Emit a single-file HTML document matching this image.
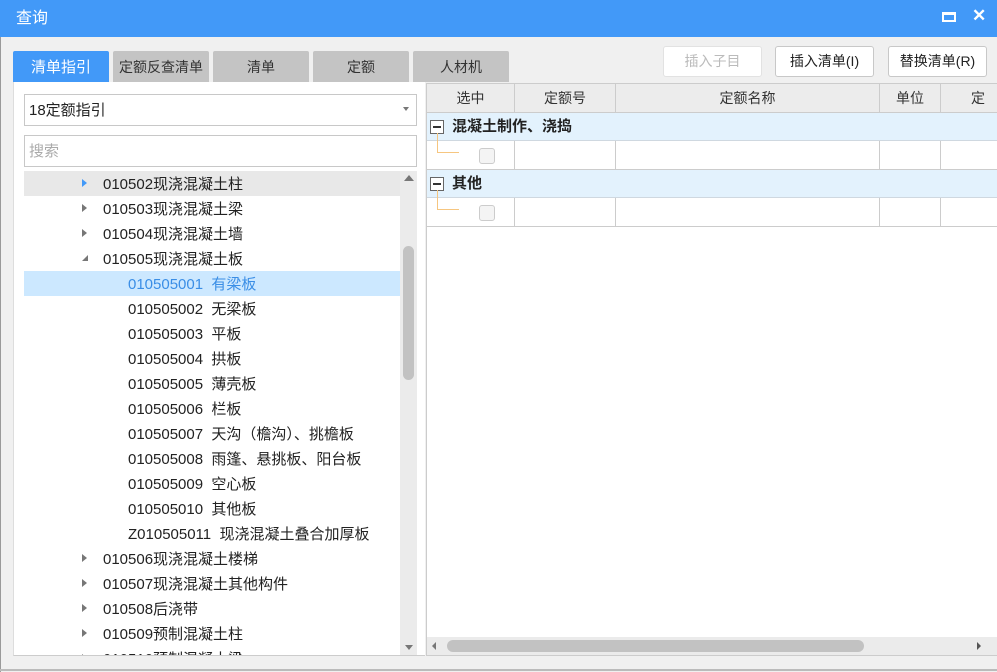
<!DOCTYPE html>
<html><head><meta charset="utf-8"><style>
*{margin:0;padding:0;box-sizing:border-box}
body{width:997px;height:672px;overflow:hidden;background:#f0f0f0;font-family:"Liberation Sans","Noto Sans CJK SC",sans-serif;font-size:14px;color:#222;position:relative}
.a{position:absolute}
.title{left:0;top:0;width:997px;height:37px;background:#4299f8;color:#fff;font-size:16px;line-height:37px;padding-left:16px}
.tab{top:51px;height:31px;width:96px;background:#c4c4c4;text-align:center;line-height:33px;color:#333;font-size:14px;border-radius:2px 2px 0 0}
.btn{top:46px;height:31px;width:99px;background:#fff;border:1px solid #c8c8c8;border-radius:3px;text-align:center;line-height:29px;font-size:14px}
.row{left:24px;width:376px;height:25px;line-height:27px;white-space:nowrap;font-size:15px}
.tri{position:absolute;left:58px;top:8px;width:0;height:0;border-top:4px solid transparent;border-bottom:4px solid transparent;border-left:5px solid #777}
.hd{top:84px;height:29px;line-height:29px;text-align:center;background:#ececec;border-right:1px solid #ccc;border-bottom:1px solid #ccc;font-size:14px;color:#333}
.grp{left:427px;width:570px;height:28px;background:#e3f2fd;border-bottom:1px solid #cfd8e0;font-weight:bold;font-size:15px;line-height:28px;padding-left:25px}
.minus{position:absolute;left:3px;top:7px;width:14px;height:14px;border:1px solid #666;background:#fff}
.minus:after{content:"";position:absolute;left:2px;top:5px;width:8px;height:1.5px;background:#333}
.cell{height:29px;border-right:1px solid #ccc;border-bottom:1px solid #ccc;background:#fff}
.cb{position:absolute;left:52px;top:7px;width:16px;height:16px;border:1px solid #ccc;border-radius:3px;background:#f4f4f4}
.ln{position:absolute;left:10px;top:-8px;width:22px;height:20px;border-left:1px solid #f6c680;border-bottom:1px solid #f6c680}
</style></head><body>
<div class="a title">查询</div>
<div class="a" style="left:942px;top:12px;width:14px;height:10px;border:2px solid #fff;border-top-width:3px"></div>
<div class="a" style="left:972px;top:6px;color:#fff;font-size:17px;font-weight:bold;line-height:20px">✕</div>
<div class="a" style="left:0;top:37px;width:1px;height:635px;background:#9a9a9a"></div>
<div class="a" style="left:0;top:669px;width:997px;height:2px;background:#bbb"></div>

<div class="a tab" style="left:13px;background:#4299f8;color:#fff;font-size:15px">清单指引</div>
<div class="a tab" style="left:113px">定额反查清单</div>
<div class="a tab" style="left:213px">清单</div>
<div class="a tab" style="left:313px">定额</div>
<div class="a tab" style="left:413px">人材机</div>

<div class="a btn" style="left:663px;color:#bbb;border-color:#e2e2e2">插入子目</div>
<div class="a btn" style="left:775px">插入清单(I)</div>
<div class="a btn" style="left:888px">替换清单(R)</div>

<div class="a" style="left:13px;top:82px;width:412px;height:574px;background:#fff;border-left:1px solid #ddd;border-bottom:1px solid #ccc"></div>
<div class="a" style="left:24px;top:94px;width:393px;height:32px;border:1px solid #c8c8c8;line-height:31px;padding-left:4px;font-size:15px">18定额指引</div>
<div class="a" style="left:403px;top:107px;border-left:3px solid transparent;border-right:3px solid transparent;border-top:4px solid #777"></div>
<div class="a" style="left:24px;top:135px;width:393px;height:32px;border:1px solid #c8c8c8;line-height:31px;padding-left:4px;color:#aaa;font-size:15px">搜索</div>

<div class="a" style="left:24px;top:171px;width:393px;height:484px;overflow:hidden">
<div class="a row" style="left:0;top:0;background:#e8e8e8"><span class="tri" style="border-left-color:#4299f8"></span><span style="position:absolute;left:79px">010502现浇混凝土柱</span></div>
<div class="a row" style="left:0;top:25px"><span class="tri"></span><span style="position:absolute;left:79px">010503现浇混凝土梁</span></div>
<div class="a row" style="left:0;top:50px"><span class="tri"></span><span style="position:absolute;left:79px">010504现浇混凝土墙</span></div>
<div class="a row" style="left:0;top:75px"><span style="position:absolute;left:58px;top:9px;border-left:6px solid transparent;border-bottom:6px solid #777"></span><span style="position:absolute;left:79px">010505现浇混凝土板</span></div>
<div class="a row" style="left:0;top:100px;background:#cce8ff;color:#3a8ee6"><span style="position:absolute;left:104px">010505001&nbsp;&nbsp;有梁板</span></div>
<div class="a row" style="left:0;top:125px"><span style="position:absolute;left:104px">010505002&nbsp;&nbsp;无梁板</span></div>
<div class="a row" style="left:0;top:150px"><span style="position:absolute;left:104px">010505003&nbsp;&nbsp;平板</span></div>
<div class="a row" style="left:0;top:175px"><span style="position:absolute;left:104px">010505004&nbsp;&nbsp;拱板</span></div>
<div class="a row" style="left:0;top:200px"><span style="position:absolute;left:104px">010505005&nbsp;&nbsp;薄壳板</span></div>
<div class="a row" style="left:0;top:225px"><span style="position:absolute;left:104px">010505006&nbsp;&nbsp;栏板</span></div>
<div class="a row" style="left:0;top:250px"><span style="position:absolute;left:104px">010505007&nbsp;&nbsp;天沟（檐沟）、挑檐板</span></div>
<div class="a row" style="left:0;top:275px"><span style="position:absolute;left:104px">010505008&nbsp;&nbsp;雨篷、悬挑板、阳台板</span></div>
<div class="a row" style="left:0;top:300px"><span style="position:absolute;left:104px">010505009&nbsp;&nbsp;空心板</span></div>
<div class="a row" style="left:0;top:325px"><span style="position:absolute;left:104px">010505010&nbsp;&nbsp;其他板</span></div>
<div class="a row" style="left:0;top:350px"><span style="position:absolute;left:104px">Z010505011&nbsp;&nbsp;现浇混凝土叠合加厚板</span></div>
<div class="a row" style="left:0;top:375px"><span class="tri"></span><span style="position:absolute;left:79px">010506现浇混凝土楼梯</span></div>
<div class="a row" style="left:0;top:400px"><span class="tri"></span><span style="position:absolute;left:79px">010507现浇混凝土其他构件</span></div>
<div class="a row" style="left:0;top:425px"><span class="tri"></span><span style="position:absolute;left:79px">010508后浇带</span></div>
<div class="a row" style="left:0;top:450px"><span class="tri"></span><span style="position:absolute;left:79px">010509预制混凝土柱</span></div>
<div class="a row" style="left:0;top:475px"><span class="tri"></span><span style="position:absolute;left:79px">010510预制混凝土梁</span></div>
<div class="a" style="left:376px;top:0;width:17px;height:484px;background:#ebebeb"></div>
<div class="a" style="left:379px;top:75px;width:11px;height:134px;background:#c2c2c2;border-radius:6px"></div>
<div class="a" style="left:380px;top:4px;border-left:5px solid transparent;border-right:5px solid transparent;border-bottom:6px solid #777"></div>
<div class="a" style="left:381px;top:474px;border-left:4px solid transparent;border-right:4px solid transparent;border-top:5px solid #777"></div>
</div>

<div class="a" style="left:426px;top:83px;width:571px;height:573px;background:#fff;border:1px solid #ccc;border-right:none"></div>
<div class="a hd" style="left:427px;width:88px">选中</div>
<div class="a hd" style="left:515px;width:101px">定额号</div>
<div class="a hd" style="left:616px;width:264px">定额名称</div>
<div class="a hd" style="left:880px;width:61px">单位</div>
<div class="a hd" style="left:941px;width:56px;text-align:left;padding-left:30px;border-right:none">定额</div>

<div class="a grp" style="top:113px"><span class="minus"></span>混凝土制作、浇捣</div>
<div class="a cell" style="left:427px;top:141px;width:88px"><span class="ln"></span><span class="cb"></span></div>
<div class="a cell" style="left:515px;top:141px;width:101px"></div>
<div class="a cell" style="left:616px;top:141px;width:264px"></div>
<div class="a cell" style="left:880px;top:141px;width:61px"></div>
<div class="a cell" style="left:941px;top:141px;width:56px;border-right:none"></div>
<div class="a grp" style="top:170px"><span class="minus"></span>其他</div>
<div class="a cell" style="left:427px;top:198px;width:88px"><span class="ln"></span><span class="cb"></span></div>
<div class="a cell" style="left:515px;top:198px;width:101px"></div>
<div class="a cell" style="left:616px;top:198px;width:264px"></div>
<div class="a cell" style="left:880px;top:198px;width:61px"></div>
<div class="a cell" style="left:941px;top:198px;width:56px;border-right:none"></div>

<div class="a" style="left:427px;top:637px;width:570px;height:18px;background:#ebebeb"></div>
<div class="a" style="left:447px;top:640px;width:417px;height:12px;background:#c2c2c2;border-radius:6px"></div>
<div class="a" style="left:432px;top:642px;border-top:4px solid transparent;border-bottom:4px solid transparent;border-right:4px solid #777"></div>
<div class="a" style="left:977px;top:642px;border-top:4px solid transparent;border-bottom:4px solid transparent;border-left:4px solid #555"></div>
</body></html>
